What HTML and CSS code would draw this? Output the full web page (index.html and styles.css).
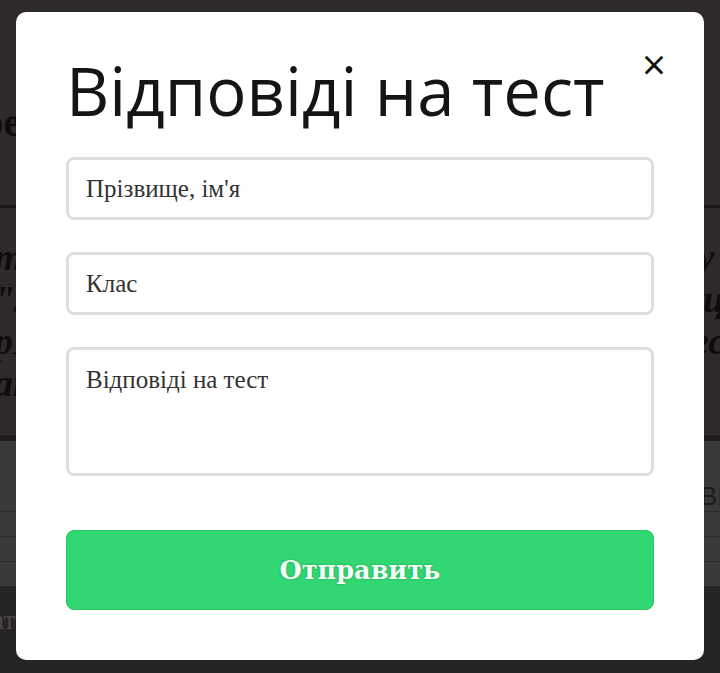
FILE: index.html
```html
<!DOCTYPE html>
<html lang="uk">
<head>
    <meta charset="UTF-8">
    <meta name="viewport" content="width=device-width, initial-scale=1.0">
    <title>Відповіді на тест</title>
    <link rel="stylesheet" href="styles.css">
</head>
<body>
    <!-- Сторінка під вікном -->
    <div class="page">
        <div class="page-top">
            <span class="top-word">Оперативна перевірка</span>
        </div>
        <div class="page-hero">
            <p class="hero-text">mТест з української мови для учнів 7 класу нI</p>
            <p class="hero-text">"Лексика і фразеологія" та правопис слів ц</p>
            <p class="hero-text">pПрочитайте уважно кожне завдання тесту</p>
            <p class="hero-text">aта надішліть свої відповіді вчителю</p>
        </div>
        <div class="page-table">
            <div class="table-head">ВІДПОВІДІ НА ТЕСТ</div>
            <div class="table-row"></div>
            <div class="table-row"></div>
            <div class="table-row"></div>
        </div>
        <div class="page-bottom">
            <span class="bottom-word">Подати</span>
        </div>
    </div>

    <!-- Модальне вікно -->
    <div class="popup">
        <div class="popup-content">
            <span class="close-popup">&times;</span>
            <h1>Відповіді на тест</h1>
            <form class="form">
                <input type="text" class="field" placeholder="Прізвище, ім'я">
                <input type="text" class="field" placeholder="Клас">
                <textarea class="field field-area" placeholder="Відповіді на тест"></textarea>
                <button type="button" class="button">Отправить</button>
            </form>
        </div>
    </div>
</body>
</html>
```

FILE: styles.css
```css
body {
    margin: 0;
    background-color: #2e2a2b;
    font-family: "Liberation Serif", serif;
    overflow: hidden;
}

.page {
    height: 673px;
    display: flex;
    flex-direction: column;
    overflow: hidden;
}

.page-top {
    height: 205px;
    border-bottom: 3px solid #1a1718;
    display: flex;
    align-items: center;
}

.top-word {
    font-size: 40px;
    font-weight: bold;
    color: #0d0b0c;
    margin-left: -290px;
    margin-top: 40px;
    white-space: nowrap;
}

.page-hero {
    height: 227px;
    padding: 28px 0 0 0;
    box-sizing: border-box;
}

.hero-text {
    margin: 0 0 0 -6px;
    font-size: 38px;
    line-height: 42px;
    font-style: italic;
    font-weight: bold;
    color: #0e0c0d;
    white-space: nowrap;
}

.page-table {
    height: 145px;
    background-color: #3a3838;
    border-top: 6px solid #1d1b1b;
}

.table-head {
    height: 70px;
    line-height: 110px;
    font-family: "Liberation Sans", sans-serif;
    font-size: 26px;
    color: #1c1a1a;
    white-space: nowrap;
    padding-left: 700px;
    border-bottom: 1px solid #2c2a2a;
}

.table-row {
    height: 24px;
    border-bottom: 1px solid #2c2a2a;
}

.page-bottom {
    flex: 1;
    background-color: #272425;
    font-size: 28px;
    color: #4a4748;
    padding: 18px 0 0 0;
}

.bottom-word {
    margin-left: -56px;
}

/* Модальне вікно */
.popup {
    position: fixed;
    top: 0;
    left: 0;
    width: 100%;
    height: 100%;
    display: flex;
    justify-content: center;
    align-items: flex-start;
}

.popup-content {
    position: relative;
    margin-top: 12px;
    width: 688px;
    height: 648px;
    box-sizing: border-box;
    background-color: #fff;
    border-radius: 10px;
    padding: 38px 50px 50px 50px;
}

.close-popup {
    position: absolute;
    top: 30px;
    right: 38px;
    font-family: "Open Sans", sans-serif;
    font-size: 42px;
    line-height: 44px;
    color: #111;
    cursor: pointer;
}

h1 {
    margin: 0 0 27px 0;
    font-family: "Open Sans", sans-serif;
    font-weight: normal;
    font-size: 67px;
    line-height: 80px;
    color: #151515;
}

.form {
    display: flex;
    flex-direction: column;
    gap: 32px;
}

.field {
    height: 63px;
    box-sizing: border-box;
    border: 3px solid #dedede;
    border-radius: 8px;
    padding: 0 17px;
    font-family: "Liberation Serif", serif;
    font-size: 25px;
    color: #333;
    outline: none;
}

.field::placeholder {
    color: #333;
}

.field-area {
    height: 129px;
    padding-top: 16px;
    resize: none;
}

.button {
    margin-top: 22px;
    height: 80px;
    border: 1px solid #2cc766;
    border-radius: 8px;
    background-color: #31d773;
    color: #f4fff7;
    font-family: "DejaVu Serif", serif;
    font-size: 25.5px;
    font-weight: bold;
    text-shadow: 0 0 2px rgba(0, 80, 30, 0.5);
    cursor: pointer;
}
```
